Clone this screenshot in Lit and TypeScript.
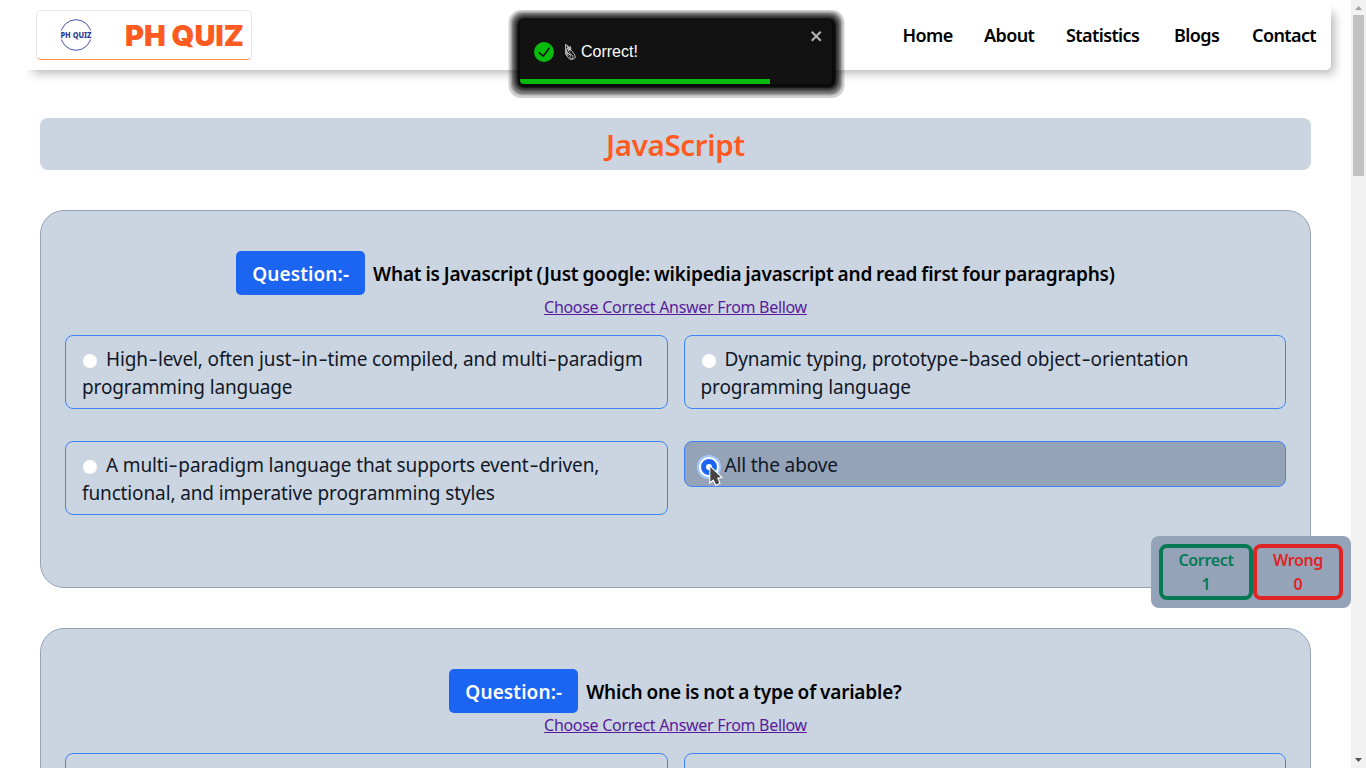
import { LitElement, html, css } from "lit";
import { customElement, property } from "lit/decorators.js";

interface Question {
  text: string;
  options: string[];
  picked?: number;
}

const QUESTIONS: Question[] = [
  {
    text: "What is Javascript (Just google: wikipedia javascript and read first four paragraphs)",
    options: [
      "High-level, often just-in-time compiled, and multi-paradigm programming language",
      "Dynamic typing, prototype-based object-orientation programming language",
      "A multi-paradigm language that supports event-driven, functional, and imperative programming styles",
      "All the above",
    ],
    picked: 3,
  },
  { text: "Which one is not a type of variable?", options: ["", ""] },
];

// Hyphens are drawn wider than the font's own glyph.
const wideHyphens = (text: string) =>
  text.split("-").map((part, i) => (i ? html`<span class="hyphen">-</span>${part}` : part));

@customElement("quiz-question")
class QuizQuestion extends LitElement {
  @property({ attribute: false }) question!: Question;

  static styles = css`
    :host { display: block; }
    * { box-sizing: border-box; }
    .card {
      background: #cbd5e1;
      border: 1px solid #94a3b8;
      border-radius: 24px;
      height: 378px;
      padding: 40px 24px 0;
    }
    .title {
      display: flex;
      justify-content: center;
      align-items: center;
      gap: 8px;
      font-size: 19px;
      font-weight: 600;
      line-height: 29px;
      color: #000;
      white-space: nowrap;
    }
    .q { letter-spacing: -0.2px; word-spacing: -0.7px; padding-top: 2px; }
    .tag {
      background: #1c64f2;
      color: #fff;
      border-radius: 5px;
      padding: 9px 16px 6px;
      height: 44px;
      letter-spacing: 0.1px;
    }
    .hint {
      text-align: center;
      font-size: 16px;
      line-height: 24px;
      letter-spacing: -0.3px;
      color: #581c9a;
      text-decoration: underline;
    }
    .options {
      display: grid;
      grid-template-columns: 1fr 1fr;
      align-items: start;
      gap: 32px 16px;
      margin-top: 16px;
    }
    .option {
      border: 1px solid #3f83f8;
      border-radius: 8px;
      padding: 9px 10px 7px 16px;
      min-height: 46px;
      font-size: 19px;
      line-height: 28px;
      letter-spacing: -0.13px;
      color: #111827;
    }
    .option.picked { background: #94a3b8; }
    .hyphen { display: inline-block; transform: scaleX(1.5); margin: 0 2px; }
    .radio {
      display: inline-block;
      width: 16px;
      height: 16px;
      border-radius: 50%;
      border: 1px solid #cbd5e1;
      background: #fff;
      vertical-align: -3px;
      margin-right: 8px;
    }
    .picked .radio {
      border: 5px solid #1c64f2;
      box-shadow: 0 0 0 2px #fff, 0 0 0 4px #a4cafe;
    }
  `;

  render() {
    const q = this.question;
    return html`<section class="card">
      <div class="title"><span class="tag">Question:-</span><span class="q">${q.text}</span></div>
      <div class="hint">Choose Correct Answer From Bellow</div>
      <div class="options">
        ${q.options.map(
          (o, i) => html`<div class="option ${q.picked === i ? "picked" : ""}"><span class="radio"></span>${wideHyphens(o)}</div>`
        )}
      </div>
    </section>`;
  }
}

@customElement("app-root")
class AppRoot extends LitElement {
  static styles = css`
    :host {
      display: block;
      position: relative;
      height: 768px;
      overflow: hidden;
      background: #fff;
      font-family: "Noto Sans", sans-serif;
      color: #000;
    }
    * { box-sizing: border-box; }
    .shell { display: flex; height: 768px; }
    .page { width: 1351px; height: 768px; overflow: hidden; padding: 0 40px; }
    .header {
      margin: 0 -20px;
      height: 70px;
      display: flex;
      align-items: center;
      justify-content: space-between;
      padding: 0 16px;
      border-radius: 5px;
      box-shadow: 8px 8px 10px -5px rgba(0, 0, 0, 0.3);
    }
    .brand {
      display: flex;
      align-items: center;
      width: 216px;
      height: 50px;
      border: 1px solid #e5e7eb;
      border-bottom-color: #ff8a4c;
      border-radius: 5px;
      padding-left: 15px;
    }
    .name {
      margin-left: 24px;
      padding-top: 2px;
      font: 900 29px/36px Inter, sans-serif;
      color: #ff5a1f;
      white-space: nowrap;
    }
    .nav {
      display: grid;
      grid-template-columns: 49.5px 50px 76px 46px 63px;
      gap: 32px;
      font-size: 18px;
      font-weight: 600;
      line-height: 28px;
      letter-spacing: -0.6px;
      white-space: nowrap;
    }
    .heading {
      margin-top: 48px;
      height: 52px;
      border-radius: 8px;
      background: #cbd5e1;
      color: #ff5a1f;
      text-align: center;
      font-size: 29.500px;
      font-weight: 600;
      line-height: 53px;
      letter-spacing: -0.35px;
    }
    quiz-question { margin-top: 40px; }
    .bar {
      width: 15px;
      display: flex;
      flex-direction: column;
      justify-content: space-between;
      background: #f1f1f1;
    }
    .score {
      position: absolute;
      left: 1151px;
      top: 536px;
      width: 200px;
      height: 72px;
      padding: 8px;
      display: flex;
      border-radius: 8px;
      background: #94a3b8;
      text-align: center;
      font-size: 16px;
      font-weight: 600;
      line-height: 24px;
      letter-spacing: -0.35px;
    }
    .cell { border: 4px solid; border-radius: 8px; }
    .good { width: 94px; color: #057a55; }
    .bad { width: 90px; color: #e02424; }
    .toast {
      position: absolute;
      left: 519.5px;
      top: 20px;
      width: 312px;
      height: 64px;
      border-radius: 4px;
      background: #121212;
      color: #fff;
      box-shadow:
        0.5px 1px 2px 3px rgba(0, 0, 0, 0.85),
        0.5px 1px 2px 6px rgba(0, 0, 0, 0.45),
        0.5px 1.500px 1px 8px rgba(0, 0, 0, 0.28),
        0.5px 1.500px 0 10px rgba(0, 0, 0, 0.2),
        0.5px 2px 0 12px rgba(0, 0, 0, 0.18);
      display: flex;
      align-items: center;
      padding: 0 8px 0 14px;
      font: 16px/24px "Liberation Sans", sans-serif;
    }
    .clap { margin: 0 4.500px 0 10px; }
    .close { align-self: flex-start; margin: 8px 0 0 auto; }
    .progress { position: absolute; left: 0; bottom: 0; height: 5px; width: 250px; background: #07bc0c; border-bottom-left-radius: 4px; }
    .cursor { position: absolute; left: 708px; top: 464px; }
    svg { display: block; flex: none; }
    .logo-text { font: 800 9px "Noto Sans", sans-serif; fill: #2a3695; }
  `;

  render() {
    return html`
      <div class="shell">
        <main class="page">
          <header class="header">
            <div class="brand">
              <svg width="49" height="34" viewBox="-8 0 49 34">
                <circle cx="16" cy="17" r="15.300" fill="none" stroke="#4650a8" stroke-width="1"/>
                <rect x="0" y="12.500" width="33" height="9" fill="#fff"/>
                <text class="logo-text" x="0.500" y="19.500" textLength="31" lengthAdjust="spacingAndGlyphs">PH QUIZ</text>
              </svg>
              <span class="name">PH QUIZ</span>
            </div>
            <nav class="nav">
              ${["Home", "About", "Statistics", "Blogs", "Contact"].map((t) => html`<span>${t}</span>`)}
            </nav>
          </header>
          <div class="heading">JavaScript</div>
          ${QUESTIONS.map((q) => html`<quiz-question .question=${q}></quiz-question>`)}
        </main>
        <div class="bar">
          <svg width="15" height="176" viewBox="0 0 15 176">
            <path d="M4 10 L7.500 6 L11 10Z" fill="#a3a3a3"/>
            <rect x="2" y="15" width="11" height="161" fill="#c1c1c1"/>
          </svg>
          <svg width="15" height="17" viewBox="0 0 15 17"><path d="M4 7 L7.500 11 L11 7Z" fill="#505050"/></svg>
        </div>
      </div>
      <div class="score">
        <div class="cell good">Correct<br />1</div>
        <div class="cell bad">Wrong<br />0</div>
      </div>
      <div class="toast">
        <svg width="20" height="20" viewBox="0 0 24 24"><path fill="#07bc0c" d="M12 0a12 12 0 1012 12A12.014 12.014 0 0012 0zm6.927 8.200l-6.845 9.289a1.011 1.011 0 01-1.430.188l-4.888-3.908a1 1 0 111.250-1.562l4.076 3.261 6.227-8.451a1 1 0 111.610 1.183z"/></svg>
        <svg class="clap" width="13" height="18" viewBox="0 0 13 18"><path d="M2 2l4 2 1 4-3-1Z M2 4v8l3 1" fill="#999"/><g fill="none" stroke="#ddd" stroke-width=".8"><path d="M1.500 1v10l4 5 3 .5 3-2-1-3-3-4-5-6M3 5l4 7M2 8l4 4M4 7l3-1M6 3l1 3M6 14c0-3 3-3 3 0s-3 2-3 0"/></g></svg>
        <span>Correct!</span>
        <svg class="close" width="14" height="16" viewBox="0 0 14 16"><path fill="#b3b3b3" fill-rule="evenodd" d="M7.710 8.230l3.750 3.750-1.480 1.480-3.750-3.750-3.750 3.750L1 11.980l3.750-3.750L1 4.480 2.480 3l3.750 3.750L9.980 3l1.480 1.480-3.750 3.750z"/></svg>
        <div class="progress"></div>
      </div>
      <svg class="cursor" width="16" height="24" viewBox="0 0 16 24">
        <path d="M1.800 1.800V19L5.300 16.200L7.800 21.500L12 19.200L9.800 14.200L14 13.400Z" fill="#444" stroke="#fff" stroke-width="1.100"/>
      </svg>
    `;
  }
}
